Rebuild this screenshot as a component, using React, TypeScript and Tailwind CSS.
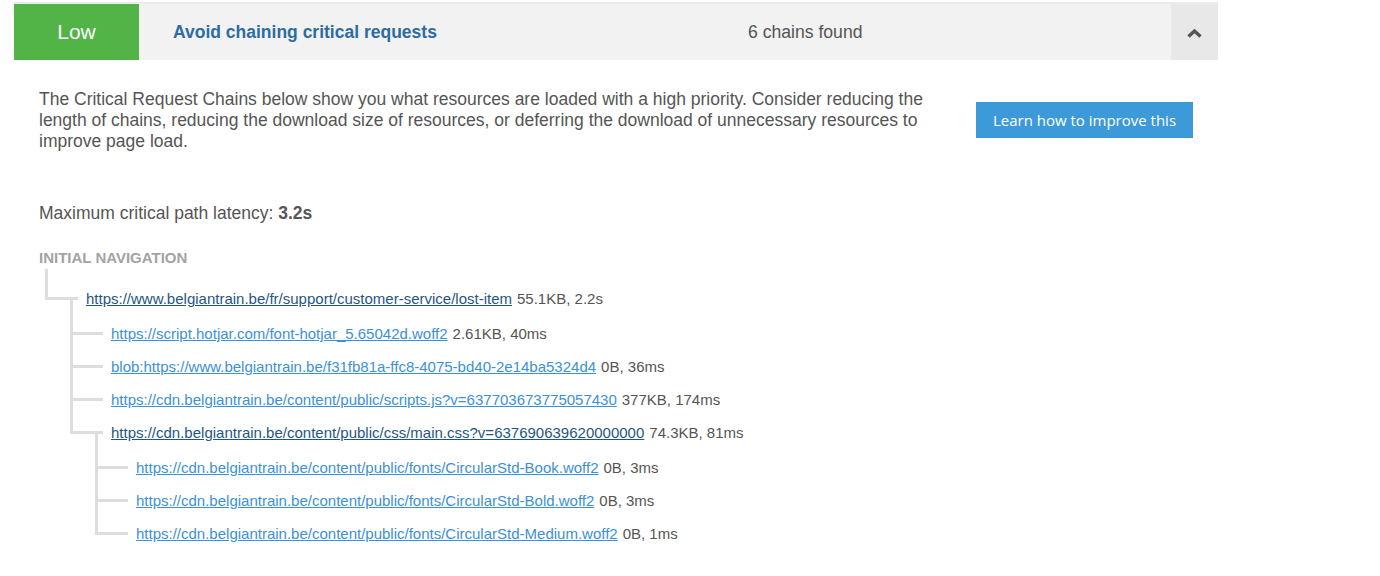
type Req = {
    url: string
    size: string
    time: string
    dark?: boolean
    children?: Req[]
}

const chain: Req = {
    url: "https://www.belgiantrain.be/fr/support/customer-service/lost-item",
    size: "55.1KB",
    time: "2.2s",
    dark: true,
    children: [
        { url: "https://script.hotjar.com/font-hotjar_5.65042d.woff2", size: "2.61KB", time: "40ms" },
        { url: "blob:https://www.belgiantrain.be/f31fb81a-ffc8-4075-bd40-2e14ba5324d4", size: "0B", time: "36ms" },
        { url: "https://cdn.belgiantrain.be/content/public/scripts.js?v=637703673775057430", size: "377KB", time: "174ms" },
        {
            url: "https://cdn.belgiantrain.be/content/public/css/main.css?v=637690639620000000",
            size: "74.3KB",
            time: "81ms",
            dark: true,
            children: [
                { url: "https://cdn.belgiantrain.be/content/public/fonts/CircularStd-Book.woff2", size: "0B", time: "3ms" },
                { url: "https://cdn.belgiantrain.be/content/public/fonts/CircularStd-Bold.woff2", size: "0B", time: "3ms" },
                { url: "https://cdn.belgiantrain.be/content/public/fonts/CircularStd-Medium.woff2", size: "0B", time: "1ms" },
            ],
        },
    ],
}

function ChainItem({ node, last, first, root }: { node: Req; last: boolean; first?: boolean; root?: boolean }) {
    // first row of a nested group sits a little lower than the rest
    const rowHeight = root ? "h-[31px]" : first ? "h-[35px]" : "h-[33px]"
    return (
        <li className={last ? "flex flex-col" : "flex flex-col border-l-[3px] border-[#dddddd]"}>
            <div className={`flex items-end ${rowHeight}`}>
                <div
                    className={
                        last
                            ? "h-full w-[33px] shrink-0 border-l-[3px] border-b-[3px] border-[#dddddd]"
                            : "h-full w-[30px] shrink-0 border-b-[3px] border-[#dddddd]"
                    }
                />
                <div className="ml-2 -mb-[9px] whitespace-nowrap text-[15px] leading-[20px] text-[#555555]">
                    <a
                        href="#"
                        className={node.dark ? "text-[#1f5686] underline" : "text-[#3b91d9] underline"}
                    >
                        {node.url}
                    </a>
                    <span className="ml-[5px]">{node.size}, {node.time}</span>
                </div>
            </div>
            {node.children && (
                <ul className={last ? "ml-[25px] flex flex-col" : "ml-[22px] flex flex-col"}>
                    {node.children.map((c, i) => (
                        <ChainItem
                            key={c.url}
                            node={c}
                            first={i === 0}
                            last={i === node.children!.length - 1}
                        />
                    ))}
                </ul>
            )}
        </li>
    )
}

export default function App() {
    return (
        <div className="min-h-screen bg-white pt-[2px] font-['Liberation_Sans',Arial,sans-serif]">
            <div className="ml-[14px] w-[1204px]">
                {/* header */}
                <div className="flex h-[58px] border-t-2 border-[#ebebeb]">
                    <div className="flex w-[125px] items-center justify-center bg-[#52b447] text-[21px] text-white">
                        Low
                    </div>
                    <div className="flex flex-1 items-center bg-[#f2f2f2] pl-[34px]">
                        <div className="w-[575px] text-[17.5px] font-bold text-[#2c6ca3]">
                            Avoid chaining critical requests
                        </div>
                        <div className="text-[17.6px] text-[#555555]">6 chains found</div>
                    </div>
                    <div className="flex w-[47px] items-center justify-center bg-[#e8e8e8]">
                        <svg width="15" height="10" viewBox="0 0 15 10" className="mt-[1px]">
                            <polyline
                                points="1.5,8.5 7.5,3 13.5,8.5"
                                fill="none"
                                stroke="#555555"
                                strokeWidth="3.4"
                                strokeLinejoin="miter"
                            />
                        </svg>
                    </div>
                </div>

                {/* body */}
                <div className="px-[25px] pt-[29px] pb-6 text-[#555555]">
                    <div className="flex items-start justify-between">
                        <p className="w-[900px] text-[17.5px] leading-[21px]">
                            The Critical Request Chains below show you what resources are loaded with a high priority. Consider
                            reducing the length of chains, reducing the download size of resources, or deferring the download of
                            unnecessary resources to improve page load.
                        </p>
                        <button className="mt-[13px] h-[36px] w-[217px] bg-[#3d9ad9] font-['Open_Sans',sans-serif] text-[15px] text-white">
                            Learn how to improve this
                        </button>
                    </div>

                    <div className="mt-[51px] text-[17.5px] leading-[21px]">
                        Maximum critical path latency: <span className="font-bold">3.2s</span>
                    </div>

                    <div className="mt-[26px] text-[15px] leading-[16px] font-bold uppercase text-[#a3a3a3]">
                        Initial navigation
                    </div>

                    <ul className="mt-[3px] ml-[6px] flex flex-col">
                        <ChainItem node={chain} last root />
                    </ul>
                </div>
            </div>
        </div>
    )
}
